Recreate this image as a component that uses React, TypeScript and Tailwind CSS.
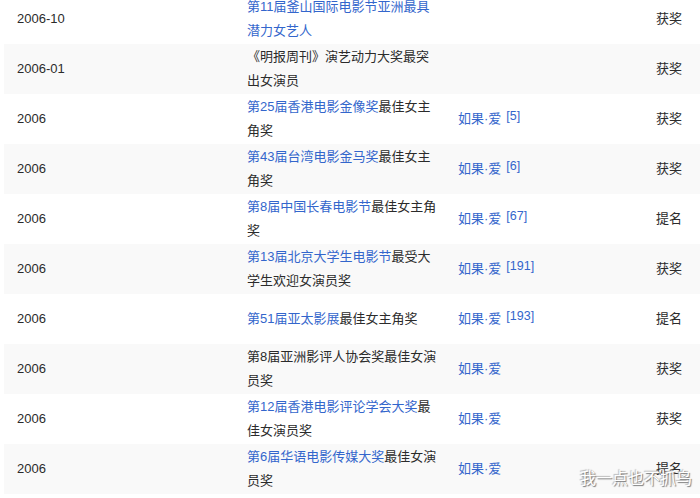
import React from "react";

type Part = { t: string; link?: boolean };
type Row = { date: string; award: Part[]; name?: boolean; ref?: string; result: string };

const rows: Row[] = [
  { date: "2006-10", award: [{ t: "第11届釜山国际电影节", link: true }, { t: "亚洲最具潜力女艺人", link: true }], result: "获奖" },
  { date: "2006-01", award: [{ t: "《明报周刊》演艺动力大奖最突出女演员" }], result: "获奖" },
  { date: "2006", award: [{ t: "第25届香港电影金像奖", link: true }, { t: "最佳女主角奖" }], name: true, ref: "[5]", result: "获奖" },
  { date: "2006", award: [{ t: "第43届台湾电影金马奖", link: true }, { t: "最佳女主角奖" }], name: true, ref: "[6]", result: "获奖" },
  { date: "2006", award: [{ t: "第8届中国长春电影节", link: true }, { t: "最佳女主角奖" }], name: true, ref: "[67]", result: "提名" },
  { date: "2006", award: [{ t: "第13届北京大学生电影节", link: true }, { t: "最受大学生欢迎女演员奖" }], name: true, ref: "[191]", result: "获奖" },
  { date: "2006", award: [{ t: "第51届亚太影展", link: true }, { t: "最佳女主角奖" }], name: true, ref: "[193]", result: "提名" },
  { date: "2006", award: [{ t: "第8届亚洲影评人协会奖最佳女演员奖" }], name: true, result: "获奖" },
  { date: "2006", award: [{ t: "第12届香港电影评论学会大奖", link: true }, { t: "最佳女演员奖" }], name: true, result: "获奖" },
  { date: "2006", award: [{ t: "第6届华语电影传媒大奖", link: true }, { t: "最佳女演员奖" }], name: true, result: "提名" },
];

export default function App() {
  return (
    <div
      className="relative w-[700px] h-[498px] overflow-hidden bg-white text-[13px] text-[#2b2b2b]"
      style={{ fontFamily: '"Liberation Sans", "Noto Sans CJK SC", sans-serif' }}
    >
      <div className="-mt-[6px] ml-[4px] flex flex-col">
        {rows.map((r, i) => (
          <div
            key={i}
            className={`grid grid-cols-[230px_211px_198px_1fr] h-[50px] items-center ${i % 2 === 1 ? "bg-[#f9f9f9]" : "bg-white"}`}
          >
            <div className="pl-[13px] leading-[24px]">{r.date}</div>
            <div className="pl-[13px] pr-[6px] leading-[24px]">
              {r.award.map((p, j) => (
                <span key={j} className={p.link ? "text-[#3366cc]" : ""}>
                  {p.t}
                </span>
              ))}
            </div>
            <div className="pl-[13px] leading-[24px] text-[#3366cc]">
              {r.name && (
                <>
                  <span>如果·爱</span>
                  {r.ref && (
                    <sup className="ml-[5px] text-[12.5px] relative -top-[3px]">{r.ref}</sup>
                  )}
                </>
              )}
            </div>
            <div className="pl-[13px] leading-[24px]">{r.result}</div>
          </div>
        ))}
      </div>
      <div className="absolute left-[580px] top-[469px] text-[16px] leading-[20px] text-white [text-shadow:1px_1px_1px_#777,-1px_-1px_1px_#bbb]">
        我一点也不抓鸟
      </div>
    </div>
  );
}
